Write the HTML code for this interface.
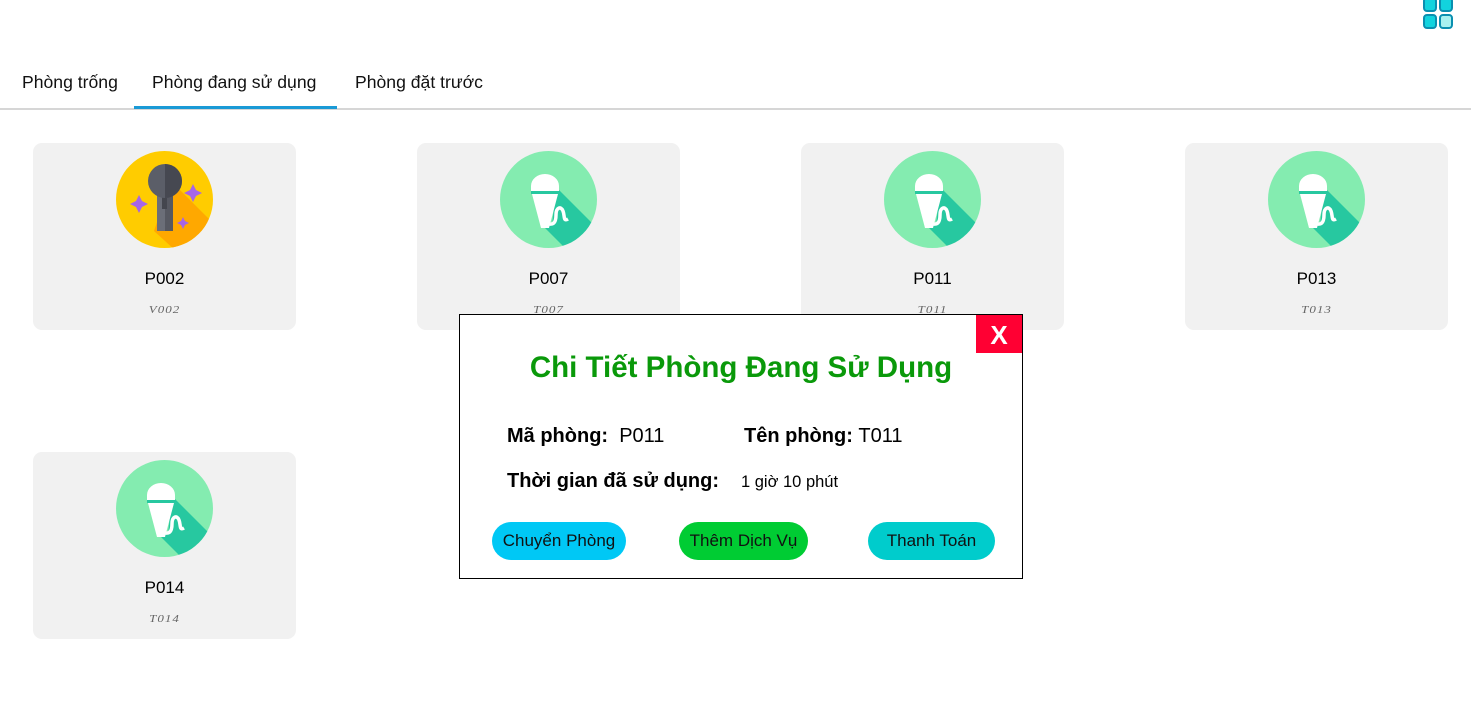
<!DOCTYPE html>
<html><head><meta charset="utf-8"><style>
body{margin:0;width:1471px;height:723px;background:#fff;font-family:"Liberation Sans","DejaVu Sans",sans-serif;position:relative;overflow:hidden}
.tab{position:absolute;top:72px;font-size:17.6px;color:#111}
.line{position:absolute;left:0;top:108px;width:1471px;height:2px;background:#d6d6d6}
.ul{position:absolute;left:134px;top:106px;width:203px;height:3px;background:#1a9ad6}
.card{position:absolute;width:263px;height:187px;background:#f1f1f1;border-radius:9px}
.card svg{position:absolute;left:83px;top:8px}
.card .n{position:absolute;top:126px;width:100%;text-align:center;font-size:17px;color:#000}
.card .s{position:absolute;top:159px;width:100%;text-align:center;font-size:13px;color:#666;font-style:italic;font-family:"Liberation Serif",serif;letter-spacing:1px;transform:scaleY(.8)}
.modal{position:absolute;left:459px;top:314px;width:562px;height:263px;border:1px solid #000;background:#fff}
.x{position:absolute;right:0;top:0;width:46px;height:38px;background:#ff0033;color:#fff;font-weight:bold;font-size:26px;text-align:center;line-height:40px}
.t{position:absolute;top:36px;left:0;width:100%;text-align:center;color:#0a990a;font-weight:bold;font-size:29.5px;font-family:"Liberation Sans",sans-serif}
.r{position:absolute;left:47px;font-size:20px;white-space:nowrap}
.r b{font-weight:bold}
.b{position:absolute;top:207px;height:38px;border-radius:19px;font-size:17px;line-height:38px;text-align:center;color:#111}
</style></head><body>
<svg style="position:absolute;left:1423px;top:0" width="30" height="30" viewBox="0 0 30 30">
<rect x="1" y="-2" width="12" height="13" rx="3" fill="#12d3de" stroke="#0a8fb0" stroke-width="2"/>
<rect x="17" y="-2" width="12" height="13" rx="3" fill="#12d3de" stroke="#0a8fb0" stroke-width="2"/>
<rect x="1" y="15" width="12" height="13" rx="3" fill="#12d3de" stroke="#0a8fb0" stroke-width="2"/>
<rect x="17" y="15" width="12" height="13" rx="3" fill="#a8f1f0" stroke="#0a8fb0" stroke-width="2"/>
</svg>
<div class="tab" style="left:22px">Phòng trống</div>
<div class="tab" style="left:152px">Phòng đang sử dụng</div>
<div class="tab" style="left:355px">Phòng đặt trước</div>
<div class="line"></div><div class="ul"></div>

<div class="card" style="left:33px;top:143px">
<svg width="97" height="97" viewBox="0 0 97 97"><defs><clipPath id="c1"><circle cx="48.5" cy="48.5" r="48.5"/></clipPath></defs>
<circle cx="48.5" cy="48.5" r="48.5" fill="#ffcc00"/>
<polygon clip-path="url(#c1)" points="55,30 100,75 100,100 60,100 38,80" fill="#ffa800"/>
<rect x="41" y="36" width="16" height="44" fill="#6b6e78"/><rect x="49" y="36" width="8" height="44" fill="#565861"/>
<rect x="46" y="44" width="5" height="14" fill="#44464e"/>
<circle cx="49" cy="30" r="17" fill="#5b5e68"/><path d="M49 13a17 17 0 0 1 0 34z" fill="#464851"/>
<path d="M23 44l3 6 6 3-6 3-3 6-3-6-6-3 6-3z" fill="#a665e6"/><path d="M77 33l3 6 6 3-6 3-3 6-3-6-6-3 6-3z" fill="#a665e6"/><path d="M67 66l2 4 4 2-4 2-2 4-2-4-4-2 4-2z" fill="#a665e6"/>
</svg><div class="n">P002</div><div class="s">V002</div></div>

<div class="card" style="left:417px;top:143px"><svg width="97" height="97" viewBox="0 0 97 97"><use href="#g"/></svg><div class="n">P007</div><div class="s">T007</div></div>
<div class="card" style="left:801px;top:143px"><svg width="97" height="97" viewBox="0 0 97 97"><use href="#g"/></svg><div class="n">P011</div><div class="s">T011</div></div>
<div class="card" style="left:1185px;top:143px"><svg width="97" height="97" viewBox="0 0 97 97"><use href="#g"/></svg><div class="n">P013</div><div class="s">T013</div></div>
<div class="card" style="left:33px;top:452px"><svg width="97" height="97" viewBox="0 0 97 97">
<defs><g id="g"><clipPath id="c2"><circle cx="48.5" cy="48.5" r="48.5"/></clipPath>
<circle cx="48.5" cy="48.5" r="48.5" fill="#84ecb0"/>
<polygon clip-path="url(#c2)" points="56,36 100,80 100,100 68,100 42,74 52,74" fill="#27c8a0"/>
<path d="M31 35a14 12 0 0 1 28 0v5H31z" fill="#fff"/><rect x="31" y="40" width="28" height="3" fill="#27c8a0"/>
<path d="M32 43h26l-9 34h-8z" fill="#fff"/>
<path d="M46 72c7 3 10 0 10-8s5-9 7-4 0 11 5 8" stroke="#fff" stroke-width="3.5" fill="none"/></g></defs>
<use href="#g"/></svg><div class="n">P014</div><div class="s">T014</div></div>

<div class="modal">
<div class="x">X</div>
<div class="t">Chi Tiết Phòng Đang Sử Dụng</div>
<div class="r" style="top:110px"><b>Mã phòng:</b>&nbsp; P011</div>
<div class="r" style="top:110px;left:284px"><b>Tên phòng:</b>&nbsp;T011</div>
<div class="r" style="top:155px"><b>Thời gian đã sử dụng:</b></div>
<div class="r" style="top:158px;left:281px;font-size:16.5px">1 giờ 10 phút</div>
<div class="b" style="left:32px;width:134px;background:#00c8f5">Chuyển Phòng</div>
<div class="b" style="left:219px;width:129px;background:#00cc33">Thêm Dịch Vụ</div>
<div class="b" style="left:408px;width:127px;background:#00cccc">Thanh Toán</div>
</div>
</body></html>
